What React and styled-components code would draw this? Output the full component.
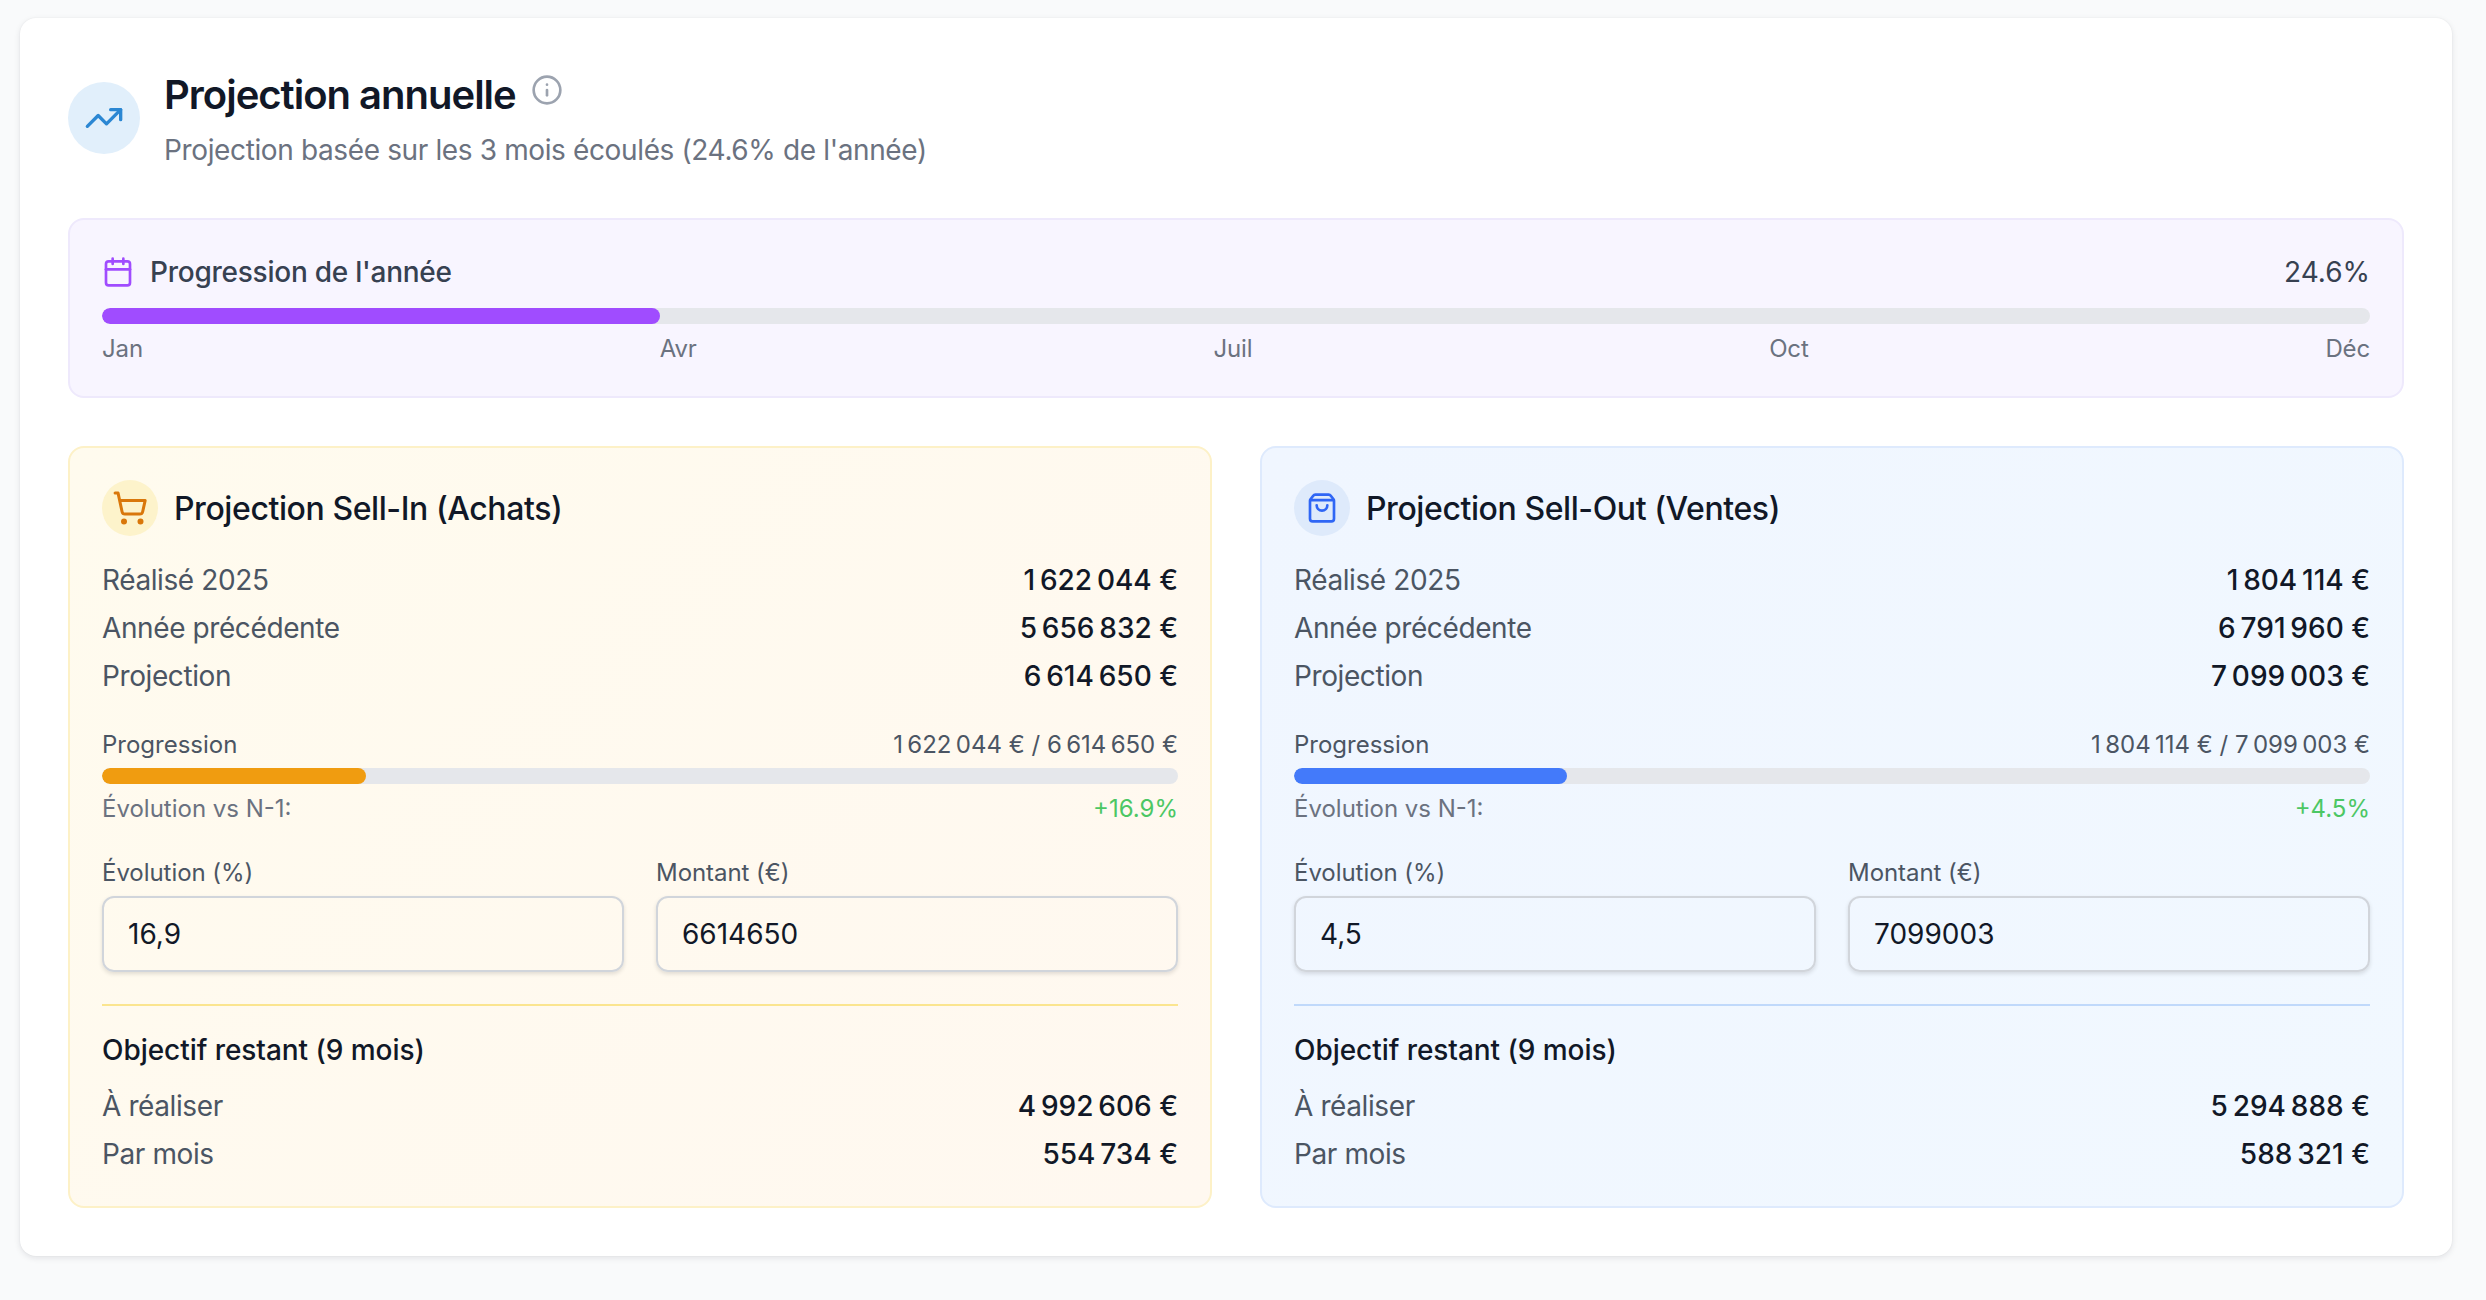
import React from "react";
import styled, { createGlobalStyle } from "styled-components";
import { TrendingUp, Info, Calendar, ShoppingCart, ShoppingBag } from "lucide-react";

const Global = createGlobalStyle`
  html, body { margin: 0; padding: 0; background: #f9fafb; }
  body { font-family: Inter, "Liberation Sans", sans-serif; color: #111827; -webkit-font-smoothing: antialiased; }
  * { box-sizing: border-box; }
`;

const Page = styled.div`
  min-height: 1300px;
  padding: 18px 34px 44px 20px;
  background: #f9fafb;
`;
const Card = styled.section`
  background: #fff;
  border-radius: 16px;
  padding: 48px;
  box-shadow: 0 2px 6px rgba(17, 24, 39, 0.1), 0 0 2px rgba(17, 24, 39, 0.06);
`;
const Header = styled.header`
  display: flex;
  align-items: center;
  gap: 24px;
  margin-bottom: 48px;
`;
const HeaderIcon = styled.div`
  width: 72px;
  height: 72px;
  border-radius: 50%;
  background: #e1effb;
  color: #2b87d3;
  display: flex;
  align-items: center;
  justify-content: center;
  flex: none;
`;
const TitleRow = styled.div`
  display: flex;
  align-items: flex-start;
  gap: 15px;
  color: #9ca3af;
  margin-bottom: 8px;
`;
const Title = styled.h1`
  margin: 0;
  padding-top: 2px;
  font-size: 40px;
  line-height: 54px;
  font-weight: 600;
  letter-spacing: -1px;
  color: #111827;
`;
const InfoWrap = styled.span`
  display: flex;
  margin-top: 8px;
`;
const Subtitle = styled.p`
  margin: 0;
  font-size: 28px;
  line-height: 40px;
  letter-spacing: -0.37px;
  color: #6b7280;
`;
const YearBox = styled.div`
  background: #f8f5ff;
  border: 2px solid #eee9fc;
  border-radius: 16px;
  padding: 32px;
  margin-bottom: 48px;
`;
const YearHead = styled.div`
  display: flex;
  justify-content: space-between;
  align-items: center;
  height: 40px;
  margin-bottom: 16px;
  font-size: 28px;
  color: #374151;
`;
const YearLabel = styled.span`
  display: flex;
  align-items: center;
  gap: 16px;
  font-weight: 500;
  letter-spacing: -0.25px;
  svg { color: #a04cff; }
`;
const Track = styled.div`
  height: 16px;
  border-radius: 8px;
  background: #e5e7eb;
  overflow: hidden;
`;
const Fill = styled.div`
  height: 100%;
  border-radius: 8px;
  background: ${(p) => p.$color};
`;
const Months = styled.div`
  display: flex;
  justify-content: space-between;
  margin-top: 8px;
  padding-top: 1px;
  font-size: 24px;
  line-height: 31px;
  letter-spacing: -0.15px;
  color: #6b7280;
`;
const Columns = styled.div`
  display: grid;
  grid-template-columns: 1fr 1fr;
  gap: 48px;
`;
const Panel = styled.article`
  border: 2px solid ${(p) => p.$border};
  border-radius: 16px;
  padding: 32px;
  background: linear-gradient(135deg, ${(p) => p.$from}, ${(p) => p.$to});
`;
const PanelHead = styled.div`
  display: flex;
  align-items: center;
  gap: 16px;
  margin-bottom: 24px;
`;
const PanelIcon = styled.div`
  width: 56px;
  height: 56px;
  border-radius: 50%;
  background: ${(p) => p.$bg};
  color: ${(p) => p.$color};
  display: flex;
  align-items: center;
  justify-content: center;
`;
const PanelTitle = styled.h2`
  margin: 0;
  padding-top: 2px;
  font-size: 32px;
  line-height: 46px;
  font-weight: 500;
  letter-spacing: -0.42px;
  color: #111827;
`;
const Rows = styled.div`
  display: flex;
  flex-direction: column;
  gap: 8px;
`;
const Row = styled.div`
  display: flex;
  justify-content: space-between;
  font-size: 28px;
  line-height: 40px;
`;
const RowLabel = styled.span`
  letter-spacing: -0.4px;
  color: #4b5563;
`;
const RowValue = styled.span`
  color: #111827;
  font-weight: 500;
  letter-spacing: -0.45px;
`;
const ProgressBlock = styled.div`
  margin-top: 32px;
`;
const ProgressHead = styled.div`
  display: flex;
  justify-content: space-between;
  padding-top: 1px;
  font-size: 24px;
  line-height: 31px;
  color: #4b5563;
  margin-bottom: 8px;
`;
const EvoRow = styled.div`
  display: flex;
  justify-content: space-between;
  margin-top: 8px;
  padding-top: 1px;
  font-size: 24px;
  line-height: 31px;
  color: #6b7280;
`;
const Delta = styled.span`
  color: #4cc764;
`;
const Fields = styled.div`
  display: grid;
  grid-template-columns: 1fr 1fr;
  gap: 32px;
  margin-top: 32px;
`;
const FieldLabel = styled.label`
  display: block;
  padding-top: 1px;
  font-size: 24px;
  line-height: 31px;
  letter-spacing: -0.05px;
  color: #4b5563;
  margin-bottom: 8px;
`;
const Input = styled.input`
  display: block;
  width: 100%;
  height: 76px;
  padding: 0 24px;
  border: 2px solid #d1d5db;
  border-radius: 12px;
  background: transparent;
  box-shadow: 0 2px 4px rgba(0, 0, 0, 0.12);
  font: 400 28px Inter, sans-serif;
  color: #111827;
  outline: none;
`;
const Remaining = styled.div`
  margin-top: 32px;
  padding-top: 24px;
  border-top: 2px solid ${(p) => p.$line};
`;
const RemainingTitle = styled.h3`
  margin: 0 0 16px;
  font-size: 28px;
  line-height: 40px;
  font-weight: 500;
  letter-spacing: -0.05px;
  color: #111827;
`;

const n = (s) => s.replace(/ /g, "\u202f") + "\u00a0€";

const panels = [
  {
    title: "Projection Sell-In (Achats)",
    Icon: ShoppingCart,
    iconSize: 36,
    theme: { border: "#fdf1c7", from: "#fffbee", to: "#fff8f0", bg: "#fdf3cb", color: "#d9770a", bar: "#f09c10", line: "#fbe58f" },
    realised: "1 622 044",
    previous: "5 656 832",
    projection: "6 614 650",
    pct: 24.52,
    delta: "+16.9%",
    evo: "16,9",
    amount: "6614650",
    toDo: "4 992 606",
    monthly: "554 734",
  },
  {
    title: "Projection Sell-Out (Ventes)",
    Icon: ShoppingBag,
    iconSize: 32,
    theme: { border: "#deeafd", from: "#f0f6ff", to: "#f1f8ff", bg: "#deeafb", color: "#2f66f5", bar: "#437afa", line: "#c0d9fb" },
    realised: "1 804 114",
    previous: "6 791 960",
    projection: "7 099 003",
    pct: 25.41,
    delta: "+4.5%",
    evo: "4,5",
    amount: "7099003",
    toDo: "5 294 888",
    monthly: "588 321",
  },
];

function ProjectionPanel({ p }) {
  const { Icon, theme } = p;
  return (
    <Panel $border={theme.border} $from={theme.from} $to={theme.to}>
      <PanelHead>
        <PanelIcon $bg={theme.bg} $color={theme.color}>
          <Icon size={p.iconSize} strokeWidth={2} />
        </PanelIcon>
        <PanelTitle>{p.title}</PanelTitle>
      </PanelHead>
      <Rows>
        <Row><RowLabel>Réalisé 2025</RowLabel><RowValue>{n(p.realised)}</RowValue></Row>
        <Row><RowLabel>Année précédente</RowLabel><RowValue>{n(p.previous)}</RowValue></Row>
        <Row><RowLabel>Projection</RowLabel><RowValue>{n(p.projection)}</RowValue></Row>
      </Rows>
      <ProgressBlock>
        <ProgressHead>
          <span>Progression</span>
          <span>{n(p.realised)} / {n(p.projection)}</span>
        </ProgressHead>
        <Track><Fill $color={theme.bar} style={{ width: `${p.pct}%` }} /></Track>
        <EvoRow><span>Évolution vs N-1:</span><Delta>{p.delta}</Delta></EvoRow>
      </ProgressBlock>
      <Fields>
        <div>
          <FieldLabel>Évolution (%)</FieldLabel>
          <Input defaultValue={p.evo} />
        </div>
        <div>
          <FieldLabel>Montant (€)</FieldLabel>
          <Input defaultValue={p.amount} />
        </div>
      </Fields>
      <Remaining $line={theme.line}>
        <RemainingTitle>Objectif restant (9 mois)</RemainingTitle>
        <Rows>
          <Row><RowLabel>À réaliser</RowLabel><RowValue>{n(p.toDo)}</RowValue></Row>
          <Row><RowLabel>Par mois</RowLabel><RowValue>{n(p.monthly)}</RowValue></Row>
        </Rows>
      </Remaining>
    </Panel>
  );
}

export default function App() {
  return (
    <Page>
      <Global />
      <Card>
        <Header>
          <HeaderIcon><TrendingUp size={40} strokeWidth={2} /></HeaderIcon>
          <div>
            <TitleRow>
              <Title>Projection annuelle</Title>
              <InfoWrap><Info size={32} strokeWidth={2} /></InfoWrap>
            </TitleRow>
            <Subtitle>Projection basée sur les 3 mois écoulés (24.6% de l'année)</Subtitle>
          </div>
        </Header>
        <YearBox>
          <YearHead>
            <YearLabel><Calendar size={32} strokeWidth={2} />Progression de l'année</YearLabel>
            <span>24.6%</span>
          </YearHead>
          <Track><Fill $color="#a04cff" style={{ width: "24.6%" }} /></Track>
          <Months>
            <span>Jan</span><span>Avr</span><span>Juil</span><span>Oct</span><span>Déc</span>
          </Months>
        </YearBox>
        <Columns>
          {panels.map((p) => <ProjectionPanel key={p.title} p={p} />)}
        </Columns>
      </Card>
    </Page>
  );
}
